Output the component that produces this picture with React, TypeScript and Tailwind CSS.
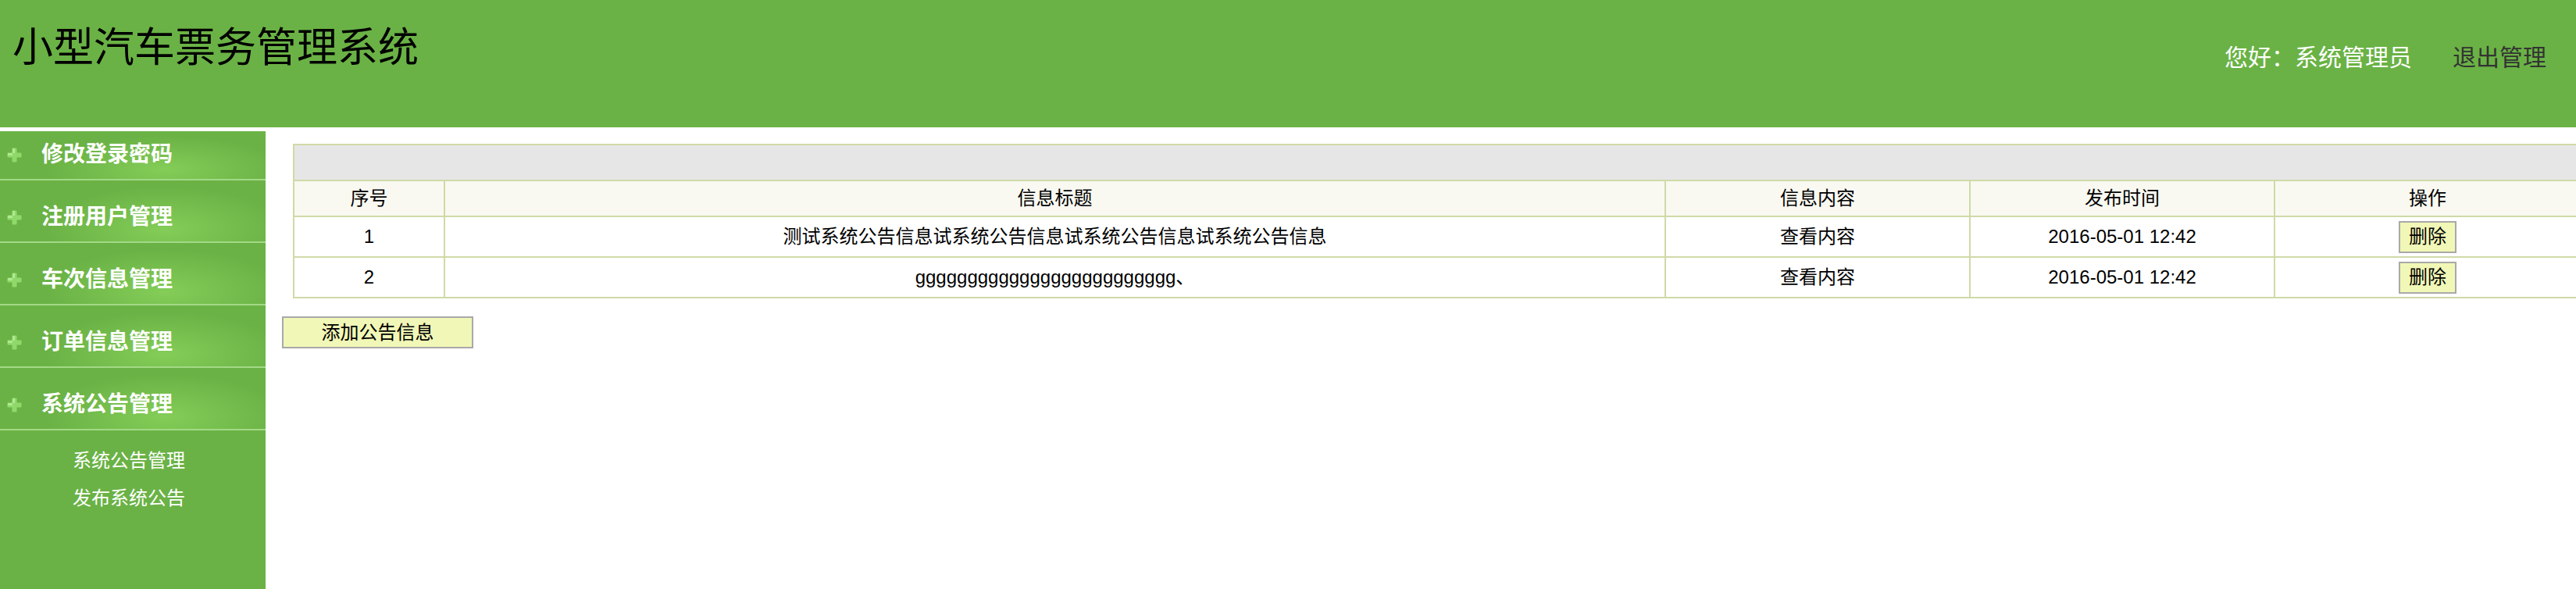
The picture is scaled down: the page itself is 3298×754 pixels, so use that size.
import React from "react";

const menus = ["修改登录密码", "注册用户管理", "车次信息管理", "订单信息管理", "系统公告管理"];

const subMenus = ["系统公告管理", "发布系统公告"];

const notices = [
  {
    id: 1,
    title: "测试系统公告信息试系统公告信息试系统公告信息试系统公告信息",
    time: "2016-05-01 12:42",
  },
  {
    id: 2,
    title: "ggggggggggggggggggggggggg、",
    time: "2016-05-01 12:42",
  },
];

function PlusIcon() {
  return (
    <svg width="19" height="19" viewBox="0 0 19 19" className="shrink-0">
      <path
        d="M6.5 1.5 Q6.5 0.5 7.5 0.5 H11.5 Q12.5 0.5 12.5 1.5 V6.5 H17.5 Q18.5 6.5 18.5 7.5 V11.5 Q18.5 12.5 17.5 12.5 H12.5 V17.5 Q12.5 18.5 11.5 18.5 H7.5 Q6.5 18.5 6.5 17.5 V12.5 H1.5 Q0.5 12.5 0.5 11.5 V7.5 Q0.5 6.5 1.5 6.5 H6.5 Z"
        fill="#8fd96a"
      />
      <path d="M7 1 H10 V7 H7 Z M1 7 H7 V10 H1 Z" fill="#b8ec9c" opacity="0.8" />
    </svg>
  );
}

export default function App() {
  return (
    <div className="min-h-screen flex flex-col bg-white font-['Liberation_Sans','Noto_Sans_CJK_SC',sans-serif]">
      {/* header */}
      <div className="h-[163px] bg-[#6ab245] flex justify-between shrink-0">
        <h1 className="pl-[16px] pt-[31px] text-[52px] leading-[60px] font-normal text-black">
          小型汽车票务管理系统
        </h1>
        <div className="pt-[59px] pr-[38px] flex gap-[52px] text-[30px] leading-[30px]">
          <span className="text-white">您好：系统管理员</span>
          <span className="text-[#333]">退出管理</span>
        </div>
      </div>

      <div className="flex flex-1 mt-[5px]">
        {/* sidebar */}
        <div className="w-[340px] shrink-0 bg-[#6ab245]">
          {menus.map((m, i) => (
            <div
              key={m}
              className={`${i === 0 ? "h-[63px]" : "h-[80px]"} flex items-end pb-[17px] border-b-2 border-[#a3d986] bg-[radial-gradient(ellipse_45%_70%_at_62%_80%,#84cd58_0%,#6ab245_100%)]`}
            >
              <div className="flex items-center pl-[9px] gap-[25px] h-[28px]">
                <PlusIcon />
                <span className="text-white font-bold text-[28px] leading-[28px]">{m}</span>
              </div>
            </div>
          ))}
          <div className="pt-[27px] pl-[93px] flex flex-col gap-[24px]">
            {subMenus.map((s) => (
              <span key={s} className="text-white text-[24px] leading-[24px]">
                {s}
              </span>
            ))}
          </div>
        </div>

        {/* content */}
        <div className="flex-1 min-w-0 overflow-hidden pt-[16px]">
          <table className="ml-[35px] w-[2928px] table-fixed border-collapse border-2 border-[#cfdaa7] text-[24px] text-black">
            <colgroup>
              <col className="w-[193px]" />
              <col className="w-[1563px]" />
              <col className="w-[390px]" />
              <col className="w-[390px]" />
              <col className="w-[392px]" />
            </colgroup>
            <thead>
              <tr className="h-[46px] bg-[#e6e6e6]">
                <th colSpan={5} className="border-2 border-[#cfdaa7]"></th>
              </tr>
              <tr className="h-[46px] bg-[#f9f9f1]">
                {["序号", "信息标题", "信息内容", "发布时间", "操作"].map((h) => (
                  <th key={h} className="border-2 border-[#cfdaa7] font-normal text-center">
                    {h}
                  </th>
                ))}
              </tr>
            </thead>
            <tbody>
              {notices.map((n) => (
                <tr key={n.id} className="h-[52px]">
                  <td className="border-2 border-[#cfdaa7] text-center">{n.id}</td>
                  <td className="border-2 border-[#cfdaa7] text-center">{n.title}</td>
                  <td className="border-2 border-[#cfdaa7] text-center">查看内容</td>
                  <td className="border-2 border-[#cfdaa7] text-center">{n.time}</td>
                  <td className="border-2 border-[#cfdaa7] text-center">
                    <button className="h-[41px] w-[74px] bg-[#f1f7b6] border-2 border-[#a9a9a9] text-[24px] leading-none align-middle">
                      删除
                    </button>
                  </td>
                </tr>
              ))}
            </tbody>
          </table>
          <button className="mt-[23px] ml-[21px] w-[245px] h-[41px] bg-[#f1f7b6] border-2 border-[#a9a9a9] text-[24px] leading-none text-black">
            添加公告信息
          </button>
        </div>
      </div>
    </div>
  );
}
